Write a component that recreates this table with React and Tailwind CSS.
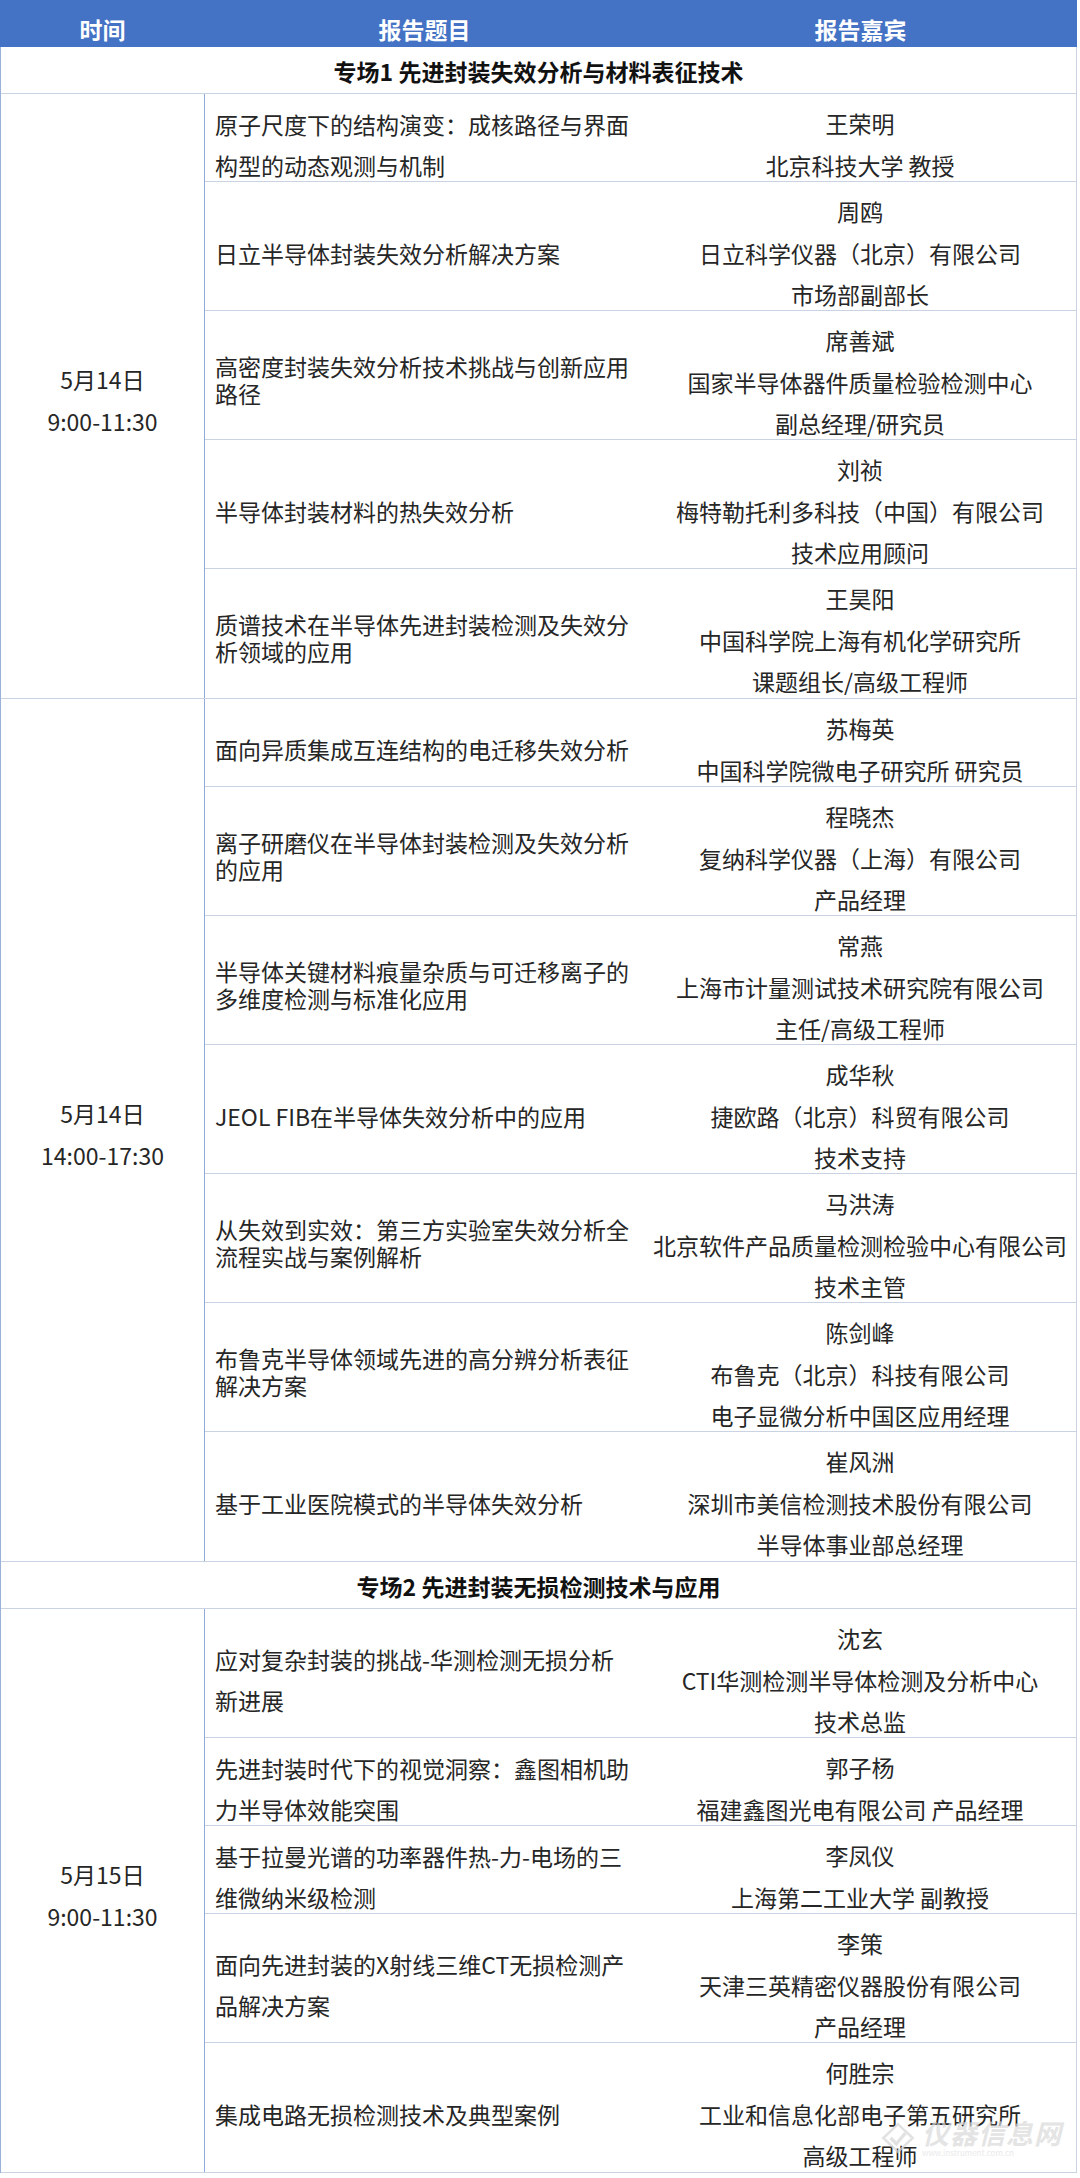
const sessions = [
  {
    section: "专场1 先进封装失效分析与材料表征技术",
    date: "5月14日",
    time: "9:00-11:30",
    rows: [
      {
        h: "h-[88px]",
        tight: false,
        title: ["原子尺度下的结构演变：成核路径与界面", "构型的动态观测与机制"],
        speaker: ["王荣明", "北京科技大学 教授"],
      },
      {
        h: "h-[129px]",
        tight: false,
        title: ["日立半导体封装失效分析解决方案"],
        speaker: ["周鸥", "日立科学仪器（北京）有限公司", "市场部副部长"],
      },
      {
        h: "h-[129px]",
        tight: true,
        title: ["高密度封装失效分析技术挑战与创新应用", "路径"],
        speaker: ["席善斌", "国家半导体器件质量检验检测中心", "副总经理/研究员"],
      },
      {
        h: "h-[129px]",
        tight: false,
        title: ["半导体封装材料的热失效分析"],
        speaker: ["刘祯", "梅特勒托利多科技（中国）有限公司", "技术应用顾问"],
      },
      {
        h: "h-[129px]",
        tight: true,
        title: ["质谱技术在半导体先进封装检测及失效分", "析领域的应用"],
        speaker: ["王昊阳", "中国科学院上海有机化学研究所", "课题组长/高级工程师"],
      },
    ],
  },
  {
    date: "5月14日",
    time: "14:00-17:30",
    rows: [
      {
        h: "h-[88px]",
        tight: false,
        title: ["面向异质集成互连结构的电迁移失效分析"],
        speaker: ["苏梅英", "中国科学院微电子研究所 研究员"],
      },
      {
        h: "h-[129px]",
        tight: true,
        title: ["离子研磨仪在半导体封装检测及失效分析", "的应用"],
        speaker: ["程晓杰", "复纳科学仪器（上海）有限公司", "产品经理"],
      },
      {
        h: "h-[129px]",
        tight: true,
        title: ["半导体关键材料痕量杂质与可迁移离子的", "多维度检测与标准化应用"],
        speaker: ["常燕", "上海市计量测试技术研究院有限公司", "主任/高级工程师"],
      },
      {
        h: "h-[129px]",
        tight: false,
        title: ["JEOL FIB在半导体失效分析中的应用"],
        speaker: ["成华秋", "捷欧路（北京）科贸有限公司", "技术支持"],
      },
      {
        h: "h-[129px]",
        tight: true,
        title: ["从失效到实效：第三方实验室失效分析全", "流程实战与案例解析"],
        speaker: ["马洪涛", "北京软件产品质量检测检验中心有限公司", "技术主管"],
      },
      {
        h: "h-[129px]",
        tight: true,
        title: ["布鲁克半导体领域先进的高分辨分析表征", "解决方案"],
        speaker: ["陈剑峰", "布鲁克（北京）科技有限公司", "电子显微分析中国区应用经理"],
      },
      {
        h: "h-[129px]",
        tight: false,
        title: ["基于工业医院模式的半导体失效分析"],
        speaker: ["崔风洲", "深圳市美信检测技术股份有限公司", "半导体事业部总经理"],
      },
    ],
  },
  {
    section: "专场2 先进封装无损检测技术与应用",
    date: "5月15日",
    time: "9:00-11:30",
    rows: [
      {
        h: "h-[129px]",
        tight: false,
        title: ["应对复杂封装的挑战-华测检测无损分析", "新进展"],
        speaker: ["沈玄", "CTI华测检测半导体检测及分析中心", "技术总监"],
      },
      {
        h: "h-[88px]",
        tight: false,
        title: ["先进封装时代下的视觉洞察：鑫图相机助", "力半导体效能突围"],
        speaker: ["郭子杨", "福建鑫图光电有限公司 产品经理"],
      },
      {
        h: "h-[88px]",
        tight: false,
        title: ["基于拉曼光谱的功率器件热-力-电场的三", "维微纳米级检测"],
        speaker: ["李凤仪", "上海第二工业大学 副教授"],
      },
      {
        h: "h-[129px]",
        tight: false,
        title: ["面向先进封装的X射线三维CT无损检测产", "品解决方案"],
        speaker: ["李策", "天津三英精密仪器股份有限公司", "产品经理"],
      },
      {
        h: "h-[129px]",
        tight: false,
        title: ["集成电路无损检测技术及典型案例"],
        speaker: ["何胜宗", "工业和信息化部电子第五研究所", "高级工程师"],
      },
    ],
  },
];

const TalkRow = ({ row }) => (
  <div
    className={`grid grid-cols-[439px_1fr] border-b border-[#c9d3e3] last:border-b-0 ${row.h}`}
  >
    {/* ---title--- */}
    <div
      className={
        row.tight
          ? "flex flex-col justify-center pl-[10px] pt-[4px] leading-[27px]"
          : "flex flex-col justify-center pl-[10px] pt-[9px] leading-[41px]"
      }
    >
      {row.title.map((t) => (
        <p key={t} className="whitespace-nowrap">
          {t}
        </p>
      ))}
    </div>
    {/* ---speaker--- */}
    <div className="flex flex-col items-center justify-center pt-[9px] leading-[41.5px]">
      {row.speaker.map((s) => (
        <p key={s} className="whitespace-nowrap">
          {s}
        </p>
      ))}
    </div>
  </div>
);

const App = () => {
  return (
    <div className="min-h-[2178px] w-[1080px] bg-white font-['Noto_Sans_CJK_SC','Noto_Sans',sans-serif] text-[23px] text-[#262626]">
      <div className="relative w-[1077px]">
        {/* -------------------header-------------------- */}
        <div className="grid h-[47px] grid-cols-[205px_439px_1fr] bg-[#4472c4] pt-[12px] font-bold text-white">
          <p className="flex items-center justify-center">时间</p>
          <p className="flex items-center justify-center">报告题目</p>
          <p className="flex items-center justify-center">报告嘉宾</p>
        </div>

        {/* -------------------body-------------------- */}
        <div className="border-l border-r border-l-[#9bb1da] border-r-[#c9d3e3]">
          {sessions.map((s, i) => (
            <div key={i}>
              {s.section && (
                <div className="flex h-[47px] items-center justify-center border-b border-[#c9d3e3] pt-[3px] font-bold text-[#111]">
                  {s.section}
                </div>
              )}
              <div className="flex border-b border-[#c9d3e3]">
                <div className="flex w-[204px] shrink-0 flex-col items-center justify-center border-r border-[#8eaadb] pt-[8px] leading-[42px]">
                  <p>{s.date}</p>
                  <p>{s.time}</p>
                </div>
                <div className="flex-1">
                  {s.rows.map((r) => (
                    <TalkRow key={r.speaker[0]} row={r} />
                  ))}
                </div>
              </div>
            </div>
          ))}
        </div>

        {/* ---watermark--- */}
        <div className="pointer-events-none absolute left-[880px] top-[2118px] flex items-center gap-[6px] whitespace-nowrap opacity-70">
          <svg width="36" height="36" viewBox="0 0 44 40" fill="none">
            <path
              d="M22 3 L40 20 L22 37 L4 20 Z"
              stroke="#d6d6d6"
              strokeWidth="3"
            />
            <path
              d="M13 20 L20 27 L31 14"
              stroke="#d6d6d6"
              strokeWidth="4"
            />
          </svg>
          <div className="flex flex-col items-start">
            <span className="text-[27px] font-bold italic leading-[30px] tracking-[1px] text-[#d9d9d9]">
              仪器信息网
            </span>
            <span className="text-[8px] leading-[10px] text-[#e2e2e2]">
              www.instrument.com.cn
            </span>
          </div>
        </div>
      </div>
    </div>
  );
};

export default App;
